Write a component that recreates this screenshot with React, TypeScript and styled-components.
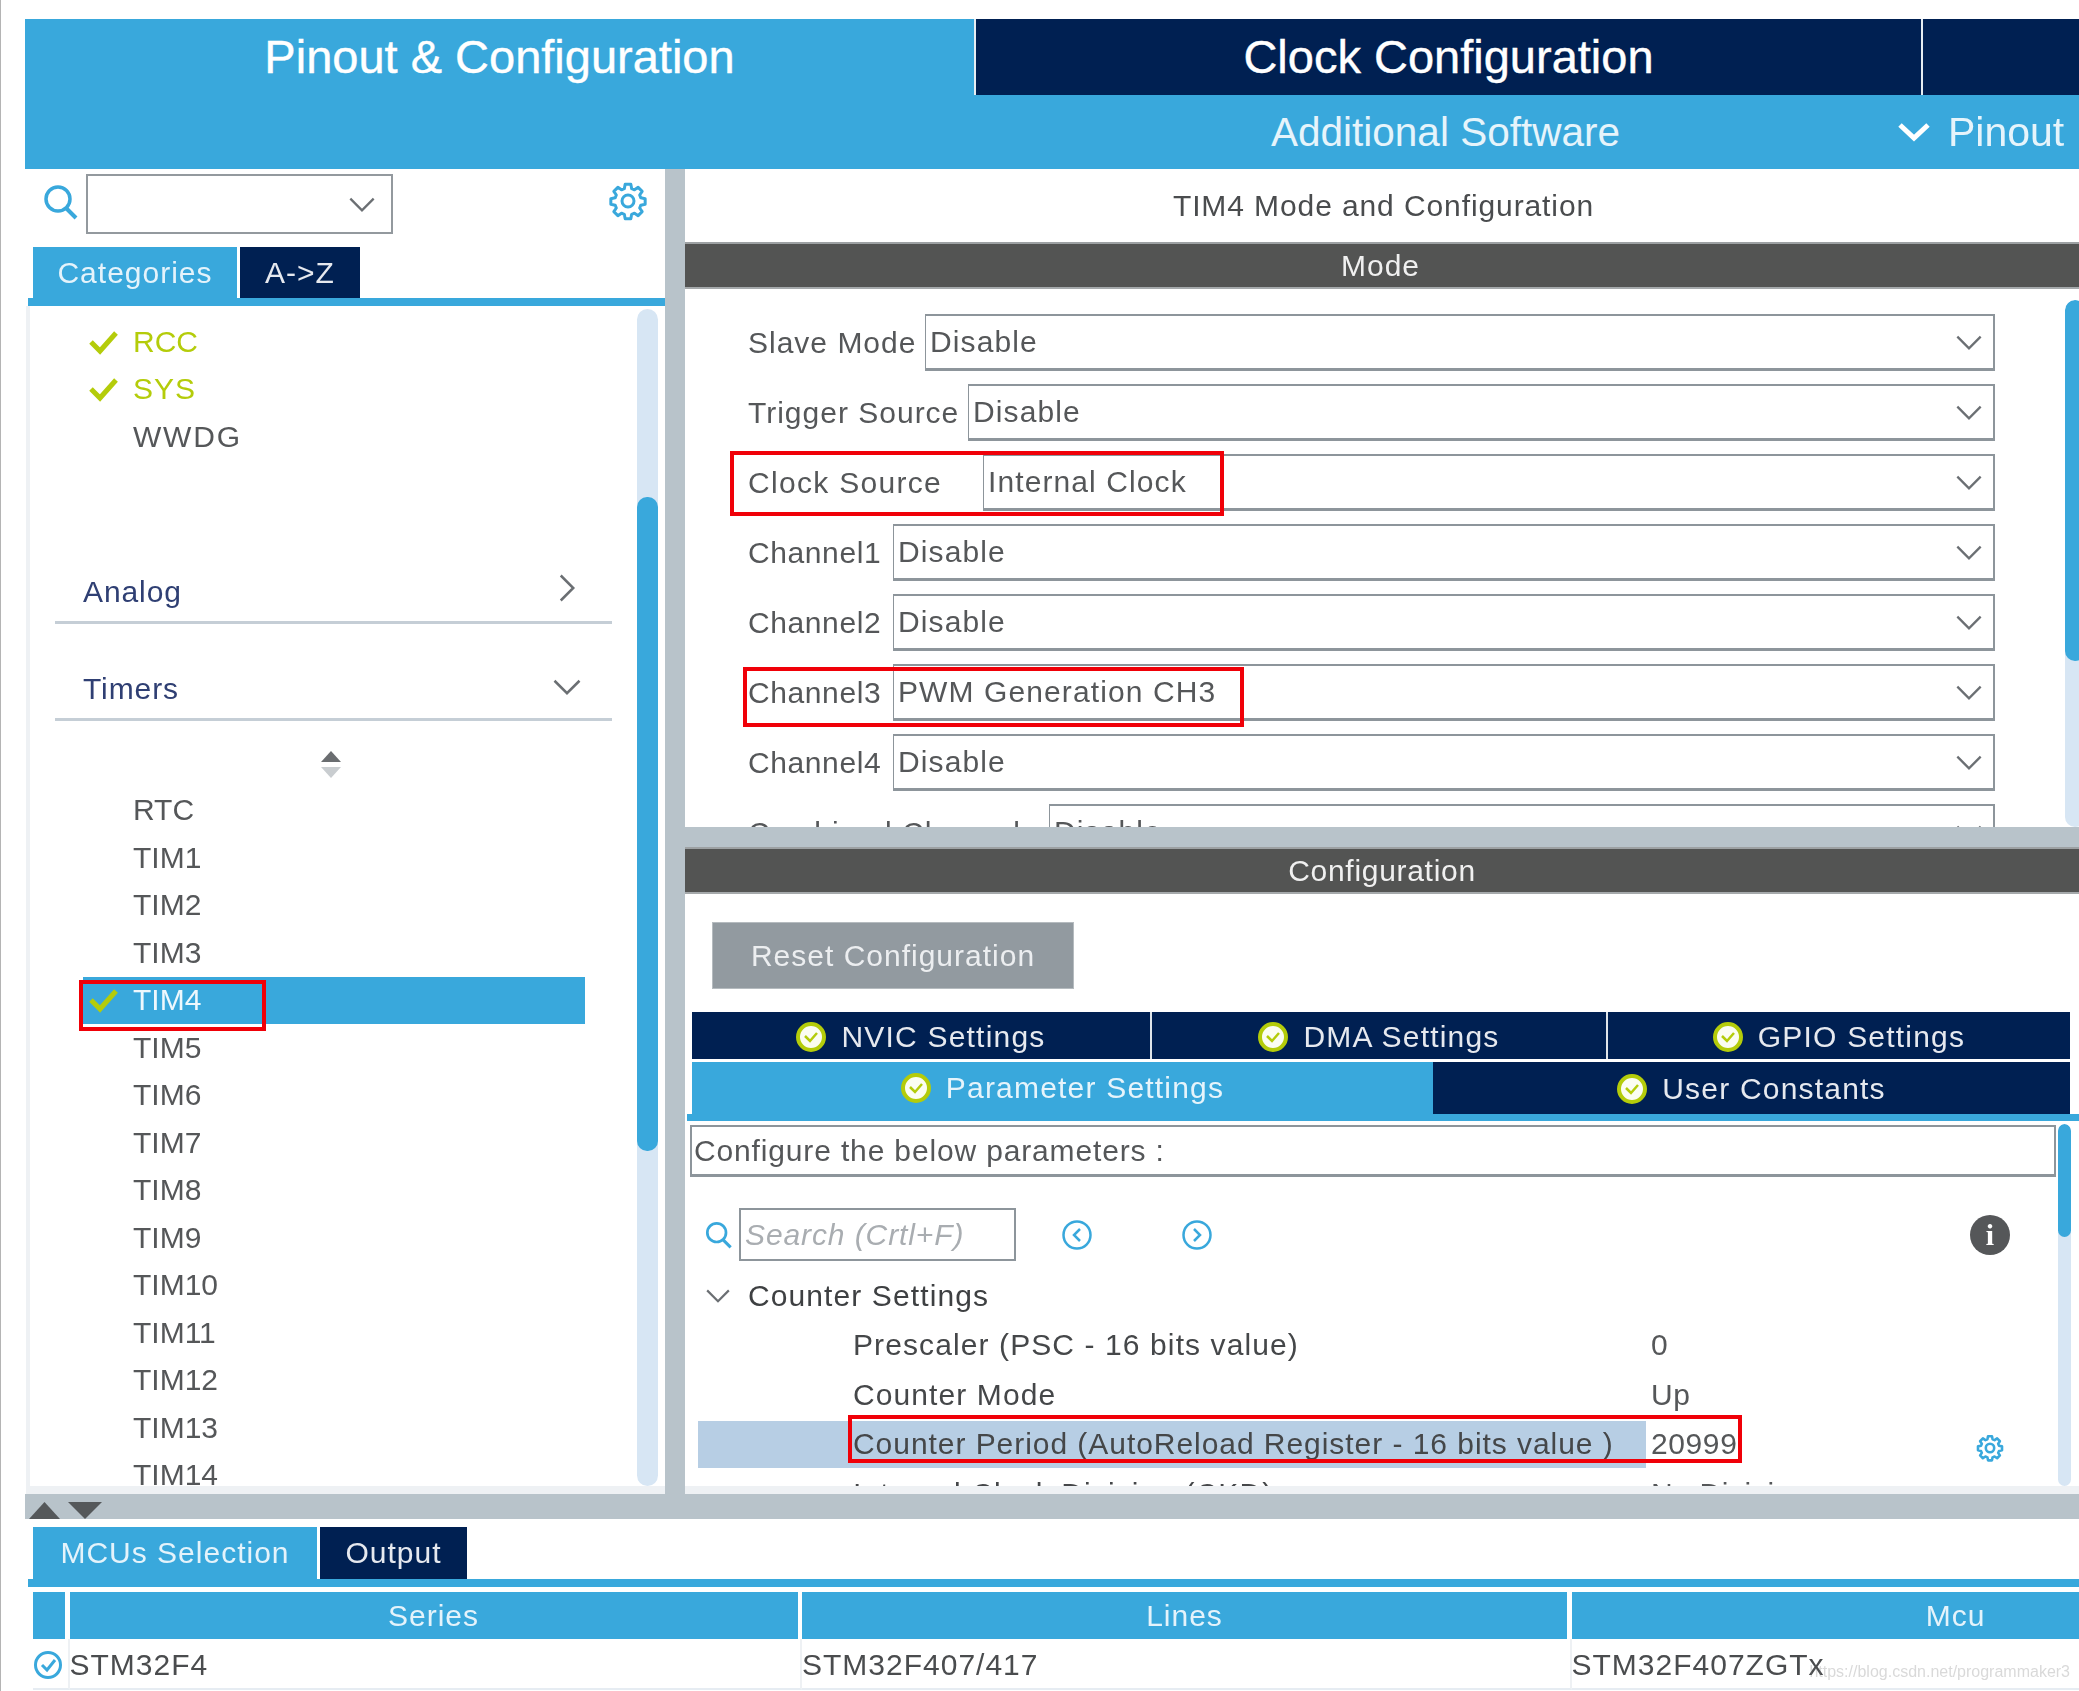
import React from "react";
import styled, { createGlobalStyle } from "styled-components";

const BLUE = "#39a8dc";
const NAVY = "#002052";
const BAR = "#535453";
const SPLIT = "#b8c3ca";
const LIME = "#b4cc0a";
const TEXT = "#555759";
const TRACK = "#d7e6f4";
const RED = "#f00008";

const Global = createGlobalStyle`
  html, body { margin: 0; padding: 0; background: #fff; }
  #root { width: 2079px; height: 1691px; overflow: hidden; }
  * { box-sizing: border-box; }
`;

const Page = styled.div`
  width: 2079px;
  height: 1691px;
  overflow: hidden;
  position: relative;
  padding: 19px 0 0 24px;
  border-left: 1px solid #b4b4b4;
  font-family: "Liberation Sans", Arial, sans-serif;
  font-size: 30px;
  color: ${TEXT};
  filter: blur(0.7px);
`;

const Header = styled.header`
  height: 150px;
  background: ${BLUE};
  display: flex;
  flex-direction: column;
`;
const TopTabs = styled.div`
  height: 76px;
  display: flex;
  flex: none;
`;
const TopTab = styled.div<{ $w?: number; $active?: boolean }>`
  ${(p) => (p.$w ? `width: ${p.$w}px; flex: none;` : "flex: 1;")}
  background: ${(p) => (p.$active ? BLUE : NAVY)};
  border-left: ${(p) => (p.$active ? "0" : "2px solid #e6edf2")};
  color: #fff;
  font-size: 47px;
  -webkit-text-stroke: 0.4px #fff;
  display: flex;
  align-items: center;
  justify-content: center;
  padding-bottom: 2px;
`;
const SubTabs = styled.div`
  flex: 1;
  display: flex;
  align-items: center;
  color: #e6f4fb;
  font-size: 40.5px;
  padding-left: 1246px;
`;
const SubPinout = styled.span`
  display: flex;
  align-items: center;
  gap: 17px;
  margin-left: 277px;
  font-size: 41px;
`;

const Middle = styled.div`
  display: flex;
  height: 1325px;
`;
const LeftCol = styled.section`
  width: 640px;
  flex: none;
  display: flex;
  flex-direction: column;
`;
const VSplit = styled.div`
  width: 20px;
  flex: none;
  background: ${SPLIT};
`;
const RightCol = styled.section`
  flex: 1;
  display: flex;
  flex-direction: column;
  min-width: 0;
`;

const SearchBar = styled.div`
  height: 78px;
  flex: none;
  display: flex;
  align-items: flex-start;
  padding-left: 18px;
`;
const SearchSlot = styled.div`
  margin-top: 15px;
  flex: none;
`;
const Combo = styled.div`
  width: 307px;
  height: 60px;
  margin: 5px 0 0 7px;
  border: 2px solid #93999e;
  display: flex;
  align-items: center;
  justify-content: flex-end;
  padding-right: 15px;
`;
const GearSlot = styled.div`
  margin: 12px 0 0 215px;
`;

const TabStrip = styled.div`
  display: flex;
  gap: 3px;
  padding-left: 8px;
  height: 51px;
  flex: none;
`;
const StripTab = styled.div<{ $w: number; $active?: boolean }>`
  width: ${(p) => p.$w}px;
  background: ${(p) => (p.$active ? BLUE : NAVY)};
  color: ${(p) => (p.$active ? "#e4f3fb" : "#e6e9ef")};
  letter-spacing: 1px;
  display: flex;
  align-items: center;
  justify-content: center;
`;
const StripLine = styled.div<{ $ml: number }>`
  height: 8px;
  flex: none;
  margin-left: ${(p) => p.$ml}px;
  background: ${BLUE};
`;

const ListPanel = styled.div`
  flex: 1;
  min-height: 0;
  display: flex;
  margin-left: 1px;
  border-left: 4px solid #eef1f4;
  border-bottom: 8px solid #eef1f4;
  padding: 3px 7px 0 0;
`;
const ListBody = styled.div`
  flex: 1;
  overflow: hidden;
  padding-top: 9px;
`;
const Track = styled.div<{ $w: number }>`
  width: ${(p) => p.$w}px;
  flex: none;
  background: ${TRACK};
  border-radius: ${(p) => p.$w / 2}px;
  overflow: hidden;
`;
const Thumb = styled.div<{ $top: number; $h: number }>`
  margin-top: ${(p) => p.$top}px;
  height: ${(p) => p.$h}px;
  background: ${BLUE};
  border-radius: 10px;
`;

const Item = styled.div<{ $selected?: boolean; $on?: boolean; $ls?: number }>`
  position: relative;
  height: 47.5px;
  width: 502px;
  margin-left: 53px;
  padding-left: 6px;
  display: flex;
  align-items: center;
  gap: 15px;
  letter-spacing: ${(p) => p.$ls ?? 0}px;
  background: ${(p) => (p.$selected ? BLUE : "transparent")};
  color: ${(p) => (p.$selected ? "#eef8fd" : p.$on ? LIME : TEXT)};
`;
const CheckSlot = styled.span`
  width: 29px;
  height: 25px;
  margin-top: -3px;
  flex: none;
  display: block;
`;
const SectionHead = styled.div<{ $mt: number }>`
  margin: ${(p) => p.$mt}px 0 0 25px;
  width: 557px;
  height: 64px;
  border-bottom: 3px solid #c5ced6;
  display: flex;
  align-items: center;
  justify-content: space-between;
  padding: 4px 30px 0 28px;
  color: #2f3f73;
  letter-spacing: 0.9px;
`;
const SectionIcon = styled.span<{ $mr: number; $mb: number }>`
  display: flex;
  margin: 0 ${(p) => p.$mr}px ${(p) => p.$mb}px 0;
`;
const SortArrows = styled.svg`
  display: block;
  margin: 30px 0 8px 290px;
`;

const Title = styled.div`
  height: 73px;
  flex: none;
  display: flex;
  align-items: center;
  justify-content: center;
  letter-spacing: 0.9px;
  color: #4a4c4e;
  padding-left: 3px;
`;
const DarkBar = styled.div<{ $ls: number; $pr: number }>`
  height: 47px;
  flex: none;
  background: ${BAR};
  border-top: 2px solid #9da1a3;
  border-bottom: 2px solid #a5a9ab;
  color: #f0f0f0;
  letter-spacing: ${(p) => p.$ls}px;
  display: flex;
  align-items: center;
  justify-content: center;
  padding-right: ${(p) => p.$pr}px;
`;
const ModeBody = styled.div`
  height: 538px;
  flex: none;
  display: flex;
  overflow: hidden;
  padding-top: 11px;
`;
const ModeRows = styled.div`
  width: 1380px;
  flex: none;
  padding: 14px 0 0 63px;
`;
const ModeRow = styled.div`
  position: relative;
  width: 1247px;
  height: 57px;
  margin-bottom: 13px;
  display: flex;
  align-items: center;
`;
const RowLabel = styled.label<{ $w: number; $ls: number }>`
  width: ${(p) => p.$w}px;
  flex: none;
  letter-spacing: ${(p) => p.$ls}px;
  white-space: nowrap;
  overflow: hidden;
`;
const SelectBox = styled.div`
  flex: 1;
  height: 57px;
  border: 1.5px solid #8d959b;
  border-width: 2px 2px 3px 1.5px;
  padding: 0 10px 0 4px;
  letter-spacing: 1.1px;
  display: flex;
  align-items: center;
  justify-content: space-between;
`;
const RedBox = styled.div<{ $l: number; $t: number; $w: number; $h: number }>`
  position: absolute;
  left: ${(p) => p.$l}px;
  top: ${(p) => p.$t}px;
  width: ${(p) => p.$w}px;
  height: ${(p) => p.$h}px;
  border: 4px solid ${RED};
  pointer-events: none;
`;

const HSplit = styled.div`
  height: 20px;
  flex: none;
  background: ${SPLIT};
`;
const ConfigBody = styled.div`
  flex: 1;
  min-height: 0;
  display: flex;
  flex-direction: column;
  border-bottom: 8px solid #eef1f4;
`;
const ResetBtn = styled.div`
  width: 362px;
  height: 67px;
  margin: 28px 0 0 27px;
  flex: none;
  background: #929aa0;
  border: 1px solid #b5bbbf;
  color: #eceef0;
  letter-spacing: 1px;
  display: flex;
  align-items: center;
  justify-content: center;
`;
const TabRow = styled.div<{ $cols: string; $mt: number; $h: number }>`
  display: grid;
  grid-template-columns: ${(p) => p.$cols};
  width: 1378px;
  height: ${(p) => p.$h}px;
  margin: ${(p) => p.$mt}px 0 0 7px;
  flex: none;
`;
const SettingTab = styled.div<{ $active?: boolean; $sep?: boolean }>`
  background: ${(p) => (p.$active ? BLUE : NAVY)};
  color: ${(p) => (p.$active ? "#e6f4fb" : "#e6e9ef")};
  border-left: ${(p) => (p.$sep ? "2px solid #dfe5ea" : "0")};
  letter-spacing: 1.2px;
  display: flex;
  align-items: center;
  justify-content: center;
  gap: 15px;
  padding-top: ${(p) => (p.$active ? 0 : 2)}px;
`;
const TabUnderline = styled.div`
  height: 7px;
  flex: none;
  margin-left: 2px;
  background: ${BLUE};
`;
const ParamArea = styled.div`
  flex: 1;
  min-height: 0;
  display: flex;
  padding-top: 3px;
`;
const ParamMain = styled.div`
  width: 1373px;
  flex: none;
  overflow: hidden;
`;
const ParamNote = styled.div`
  width: 1366px;
  height: 52px;
  margin: 1px 0 0 5px;
  border: 2px solid #8d959b;
  border-bottom-width: 3px;
  padding-left: 2px;
  letter-spacing: 0.85px;
  display: flex;
  align-items: center;
`;
const ParamSearch = styled.div`
  height: 53px;
  margin-top: 31px;
  display: flex;
  align-items: center;
  padding-left: 20px;
`;
const SearchField = styled.div`
  width: 277px;
  height: 53px;
  margin-left: 6px;
  border: 2px solid #8d959b;
  padding-left: 4px;
  color: #a9adb1;
  font-style: italic;
  letter-spacing: 0.9px;
  display: flex;
  align-items: center;
`;
const NavCircle = styled.svg<{ $ml: number }>`
  margin-left: ${(p) => p.$ml}px;
  flex: none;
`;
const InfoDot = styled.div`
  width: 40px;
  height: 40px;
  margin-left: 757px;
  border-radius: 50%;
  background: #555759;
  color: #fff;
  font: bold 30px "Liberation Serif", serif;
  display: flex;
  align-items: center;
  justify-content: center;
`;
const TreeHead = styled.div`
  height: 47px;
  margin: 11px 0 2.5px 0;
  padding-left: 20px;
  display: flex;
  align-items: center;
  gap: 17px;
  color: #3e4042;
  letter-spacing: 1.1px;
`;
const TreeRow = styled.div`
  position: relative;
  height: 47px;
  margin: 0 0 2.5px 13px;
  display: flex;
  align-items: center;
`;
const TreeName = styled.div<{ $hl?: boolean }>`
  width: 948px;
  height: 100%;
  flex: none;
  padding-left: 155px;
  background: ${(p) => (p.$hl ? "#b7cee4" : "transparent")};
  color: #454749;
  letter-spacing: ${(p) => (p.$hl ? 0.95 : 1.1)}px;
  white-space: nowrap;
  display: flex;
  align-items: center;
`;
const TreeValue = styled.div`
  width: 330px;
  flex: none;
  padding-left: 5px;
  letter-spacing: 0.6px;
`;
const RowGear = styled.span`
  display: flex;
  margin-top: 8px;
`;

const BottomBand = styled.div`
  height: 25px;
  display: flex;
  align-items: flex-end;
  gap: 8px;
  padding-left: 4px;
  background: ${SPLIT};
`;
const BottomTabs = styled.div`
  display: flex;
  gap: 3px;
  height: 52px;
  margin-top: 8px;
  padding-left: 8px;
`;
const TableGrid = styled.div`
  display: grid;
  width: 2320px;
  grid-template-columns: 32px 728px 765px 768px;
  column-gap: 4.5px;
  margin: 5px 0 0 8px;
`;
const HeadCell = styled.div`
  height: 47px;
  background: ${BLUE};
  color: #e4f3fb;
  letter-spacing: 1px;
  display: flex;
  align-items: center;
  justify-content: center;
`;
const BodyCell = styled.div`
  height: 51px;
  border-bottom: 2px solid #e6ecf2;
  display: flex;
  align-items: center;
  margin-right: -4.5px;
  border-right: 2px solid #eef1f4;
  letter-spacing: 1px;
  color: #4a4c4e;
  white-space: nowrap;
  padding-top: 2px;
`;
const Watermark = styled.div`
  position: absolute;
  right: 9px;
  bottom: 10px;
  font-size: 16px;
  color: rgba(120, 120, 120, 0.28);
  white-space: nowrap;
`;

const Chevron = ({ dir = "down", w = 28, color = "#6b6f73" }: { dir?: "down" | "right"; w?: number; color?: string }) => (
  <svg width={dir === "down" ? w : w * 0.6} height={dir === "down" ? w * 0.6 : w} viewBox={dir === "down" ? "0 0 24 14" : "0 0 14 24"} fill="none" stroke={color} strokeWidth="2">
    <path d={dir === "down" ? "M2 2 L12 12 L22 2" : "M2 2 L12 12 L2 22"} />
  </svg>
);
const Check = () => (
  <svg width="29" height="25" viewBox="0 0 29 25" fill="none" stroke={LIME} strokeWidth="5">
    <path d="M2 12 L11 21 L27 3" />
  </svg>
);
const Badge = () => (
  <svg width="30" height="30" viewBox="0 0 30 30" fill="none">
    <circle cx="15" cy="15" r="13" fill="#fbfdf2" stroke={LIME} strokeWidth="4" />
    <path d="M9 14 L14 19 L21 11" stroke={LIME} strokeWidth="2.5" />
  </svg>
);
const Lens = ({ s = 36 }: { s?: number }) => (
  <svg width={s} height={s} viewBox="0 0 36 36" fill="none" stroke={BLUE} strokeWidth="3.5">
    <circle cx="15" cy="15" r="12" />
    <path d="M23 24 L33 34" strokeWidth="4" />
  </svg>
);
const Gear = ({ s = 40, sw = 1.8 }: { s?: number; sw?: number }) => (
  <svg width={s} height={s} viewBox="0 0 24 24" fill="none" stroke={BLUE} strokeWidth={sw} strokeLinejoin="round">
    <path d="M10.3 2h3.4l.5 2.6 1.7.7 2.2-1.5 2.4 2.4-1.5 2.2.7 1.7 2.6.5v3.4l-2.6.5-.7 1.7 1.5 2.2-2.4 2.4-2.2-1.5-1.7.7-.5 2.6h-3.4l-.5-2.6-1.7-.7-2.2 1.5-2.4-2.4 1.5-2.2-.7-1.7-2.6-.5v-3.4l2.6-.5.7-1.7-1.5-2.2 2.4-2.4 2.2 1.5 1.7-.7z" />
    <circle cx="12" cy="12" r="3.6" />
  </svg>
);
const Nav = ({ ml, flip }: { ml: number; flip?: boolean }) => (
  <NavCircle $ml={ml} width="32" height="32" viewBox="0 0 32 32" fill="none" stroke={BLUE} strokeWidth="2.5">
    <circle cx="16" cy="16" r="13.5" />
    <path d={flip ? "M13 10 L19 16 L13 22" : "M19 10 L13 16 L19 22"} />
  </NavCircle>
);

const modeRows: { label: string; w: number; ls: number; value: string; red?: [number, number, number, number] }[] = [
  { label: "Slave Mode", w: 177, ls: 1, value: "Disable" },
  { label: "Trigger Source", w: 220, ls: 1, value: "Disable" },
  { label: "Clock Source", w: 235, ls: 1.3, value: "Internal Clock", red: [-18, -3, 494, 65] },
  { label: "Channel1", w: 145, ls: 0.6, value: "Disable" },
  { label: "Channel2", w: 145, ls: 0.6, value: "Disable" },
  { label: "Channel3", w: 145, ls: 0.6, value: "PWM Generation CH3", red: [-5, 3, 501, 60] },
  { label: "Channel4", w: 145, ls: 0.6, value: "Disable" },
  { label: "Combined Channels", w: 301, ls: 1, value: "Disable" },
];
const timers = ["RTC", "TIM1", "TIM2", "TIM3", "TIM4", "TIM5", "TIM6", "TIM7", "TIM8", "TIM9", "TIM10", "TIM11", "TIM12", "TIM13", "TIM14"];

export default function App() {
  return (
    <Page>
      <Global />
      <Header>
        <TopTabs>
          <TopTab $w={949} $active>Pinout &amp; Configuration</TopTab>
          <TopTab $w={947}>Clock Configuration</TopTab>
          <TopTab />
        </TopTabs>
        <SubTabs>
          Additional Software
          <SubPinout>
            <svg width="34" height="20" viewBox="0 0 34 20" fill="none" stroke="#fff" strokeWidth="5">
              <path d="M3 3 L17 16 L31 3" />
            </svg>
            Pinout
          </SubPinout>
        </SubTabs>
      </Header>
      <Middle>
        <LeftCol>
          <SearchBar>
            <SearchSlot><Lens /></SearchSlot>
            <Combo><Chevron /></Combo>
            <GearSlot><Gear /></GearSlot>
          </SearchBar>
          <TabStrip>
            <StripTab $w={204} $active>Categories</StripTab>
            <StripTab $w={120}>A-&gt;Z</StripTab>
          </TabStrip>
          <StripLine $ml={3} />
          <ListPanel>
            <ListBody>
              <Item $on><CheckSlot><Check /></CheckSlot>RCC</Item>
              <Item $on $ls={1}><CheckSlot><Check /></CheckSlot>SYS</Item>
              <Item $ls={1.8}><CheckSlot />WWDG</Item>
              <SectionHead $mt={99}>Analog<SectionIcon $mr={6} $mb={8}><Chevron dir="right" w={30} /></SectionIcon></SectionHead>
              <SectionHead $mt={33}>Timers<SectionIcon $mr={0} $mb={4}><Chevron w={30} /></SectionIcon></SectionHead>
              <SortArrows width="22" height="28" viewBox="0 0 22 28">
                <path d="M11 0 L21 11 L1 11 Z" fill="#6a6d70" />
                <path d="M11 27 L21 16 L1 16 Z" fill="#c9cdd0" />
              </SortArrows>
              {timers.map((t) =>
                t === "TIM4" ? (
                  <Item key={t} $selected>
                    <CheckSlot><Check /></CheckSlot>{t}
                    <RedBox $l={-4} $t={3} $w={187} $h={51} />
                  </Item>
                ) : (
                  <Item key={t}><CheckSlot />{t}</Item>
                )
              )}
            </ListBody>
            <Track $w={21}><Thumb $top={188} $h={654} /></Track>
          </ListPanel>
        </LeftCol>
        <VSplit />
        <RightCol>
          <Title>TIM4 Mode and Configuration</Title>
          <DarkBar $ls={1} $pr={3}>Mode</DarkBar>
          <ModeBody>
            <ModeRows>
              {modeRows.map((r) => (
                <ModeRow key={r.label}>
                  <RowLabel $w={r.w} $ls={r.ls}>{r.label}</RowLabel>
                  <SelectBox>{r.value}<Chevron /></SelectBox>
                  {r.red && <RedBox $l={r.red[0]} $t={r.red[1]} $w={r.red[2]} $h={r.red[3]} />}
                </ModeRow>
              ))}
            </ModeRows>
            <Track $w={20}><Thumb $top={0} $h={361} /></Track>
          </ModeBody>
          <HSplit />
          <DarkBar $ls={0.7} $pr={0}>Configuration</DarkBar>
          <ConfigBody>
            <ResetBtn>Reset Configuration</ResetBtn>
            <TabRow $cols="458px 456px 464px" $mt={23} $h={47}>
              <SettingTab><Badge />NVIC Settings</SettingTab>
              <SettingTab $sep><Badge />DMA Settings</SettingTab>
              <SettingTab $sep><Badge />GPIO Settings</SettingTab>
            </TabRow>
            <TabRow $cols="741px 637px" $mt={3} $h={52}>
              <SettingTab $active><Badge />Parameter Settings</SettingTab>
              <SettingTab $active={false}><Badge />User Constants</SettingTab>
            </TabRow>
            <TabUnderline />
            <ParamArea>
              <ParamMain>
                <ParamNote>Configure the below parameters :</ParamNote>
                <ParamSearch>
                  <Lens s={28} />
                  <SearchField>Search (Crtl+F)</SearchField>
                  <Nav ml={45} />
                  <Nav ml={88} flip />
                  <InfoDot>i</InfoDot>
                </ParamSearch>
                <TreeHead><Chevron w={26} />Counter Settings</TreeHead>
                <TreeRow><TreeName>Prescaler (PSC - 16 bits value)</TreeName><TreeValue>0</TreeValue></TreeRow>
                <TreeRow><TreeName>Counter Mode</TreeName><TreeValue>Up</TreeValue></TreeRow>
                <TreeRow>
                  <TreeName $hl>Counter Period (AutoReload Register - 16 bits value )</TreeName>
                  <TreeValue>20999</TreeValue>
                  <RowGear><Gear s={28} sw={2.2} /></RowGear>
                  <RedBox $l={150} $t={-6} $w={894} $h={48} />
                </TreeRow>
                <TreeRow><TreeName>Internal Clock Division (CKD)</TreeName><TreeValue>No Division</TreeValue></TreeRow>
              </ParamMain>
              <Track $w={13}><Thumb $top={0} $h={113} /></Track>
            </ParamArea>
          </ConfigBody>
        </RightCol>
      </Middle>
      <BottomBand>
        <svg width="31" height="17" viewBox="0 0 31 17"><path d="M15.5 0 L31 17 L0 17 Z" fill="#55585a" /></svg>
        <svg width="34" height="17" viewBox="0 0 34 17"><path d="M0 0 L34 0 L17 17 Z" fill="#55585a" /></svg>
      </BottomBand>
      <BottomTabs>
        <StripTab $w={284} $active>MCUs Selection</StripTab>
        <StripTab $w={147}>Output</StripTab>
      </BottomTabs>
      <StripLine $ml={3} />
      <TableGrid>
        <HeadCell />
        <HeadCell>Series</HeadCell>
        <HeadCell>Lines</HeadCell>
        <HeadCell>Mcu</HeadCell>
        <BodyCell>
          <svg width="30" height="30" viewBox="0 0 30 30" fill="none" stroke={BLUE} strokeWidth="3">
            <circle cx="15" cy="15" r="12.5" />
            <path d="M9 15 L14 20 L22 10" />
          </svg>
        </BodyCell>
        <BodyCell>STM32F4</BodyCell>
        <BodyCell>STM32F407/417</BodyCell>
        <BodyCell>STM32F407ZGTx</BodyCell>
      </TableGrid>
      <Watermark>https://blog.csdn.net/programmaker3</Watermark>
    </Page>
  );
}
